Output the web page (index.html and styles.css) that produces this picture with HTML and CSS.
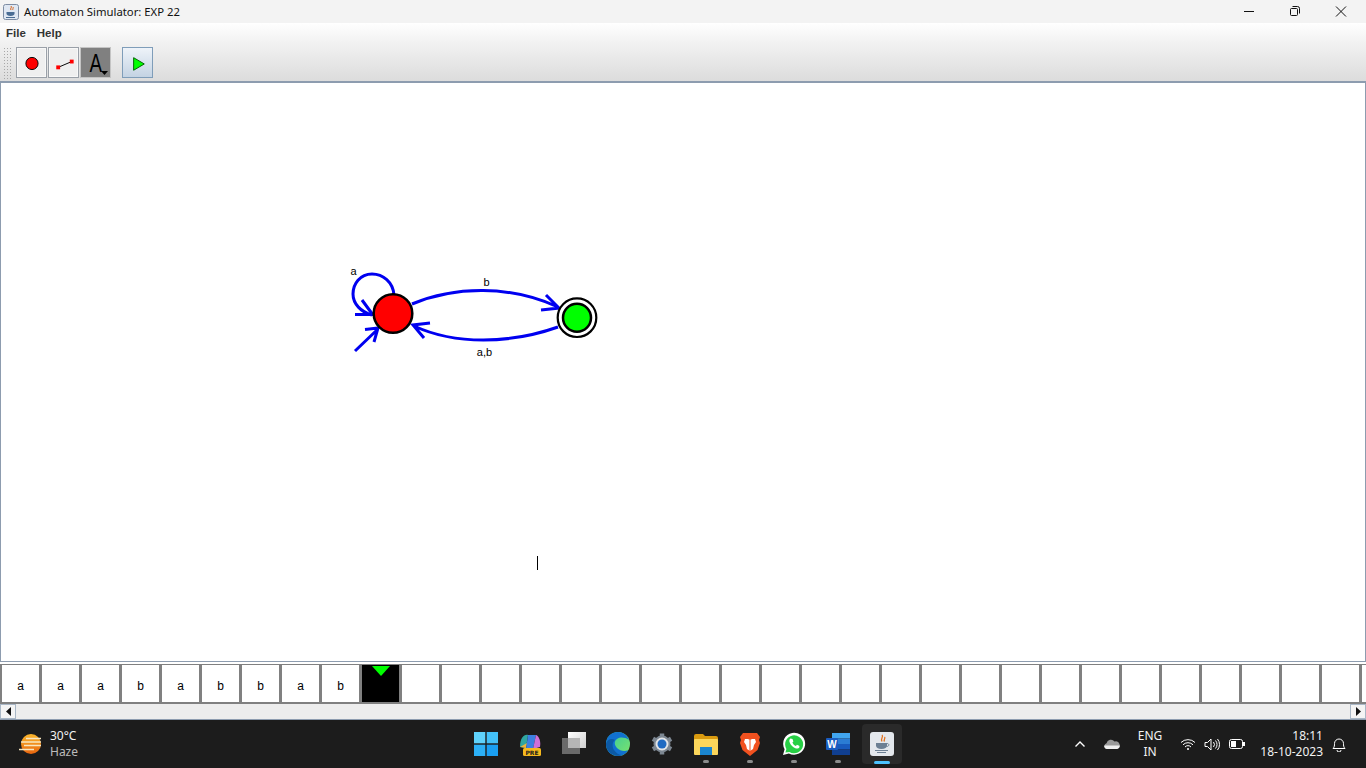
FILE: index.html
```html
<!DOCTYPE html>
<html lang="en">
<head>
<meta charset="utf-8">
<title>Automaton Simulator: EXP 22</title>
<link rel="stylesheet" href="styles.css">
</head>
<body>
<div class="app">
  <header class="titlebar">
    <svg class="app-icon" width="16" height="16" viewBox="0 0 16 16"><rect x="0.500" y="0.500" width="15" height="15" rx="2" fill="#dfe7f2" stroke="#7d8ca3"/><path d="M8 2c1.500 1.500-1.500 2.500 0 4M10 3c1 1-1 2 0 3" stroke="#d9651b" fill="none"/><path d="M3.500 8h8v1.500c0 1.500-1.500 2.500-4 2.500s-4-1-4-2.500z" fill="#4a6d94"/><path d="M3 13.500h9" stroke="#4a6d94"/></svg>
    <span class="title-text">Automaton Simulator: EXP 22</span>
    <div class="win-controls">
      <svg class="win-btn" width="46" height="22" viewBox="0 0 46 22"><path d="M18 10.500h10" stroke="#111" fill="none"/></svg>
      <svg class="win-btn" width="46" height="22" viewBox="0 0 46 22"><rect x="18.500" y="7.500" width="7" height="7" rx="1" stroke="#111" fill="none"/><path d="M20.500 5.500h5a2 2 0 0 1 2 2v5" stroke="#111" fill="none"/></svg>
      <svg class="win-btn" width="46" height="22" viewBox="0 0 46 22"><path d="M18 5.500l10 10M28 5.500l-10 10" stroke="#111" fill="none"/></svg>
    </div>
  </header>
  <nav class="menubar"><span class="menu-item">File</span><span class="menu-item">Help</span></nav>
  <div class="toolbar">
    <div class="grip"></div>
    <button class="tool"><svg width="30" height="30" viewBox="0 0 30 30"><circle cx="15.500" cy="15.500" r="6.300" fill="#f00" stroke="#000"/></svg></button>
    <button class="tool"><svg width="30" height="30" viewBox="0 0 30 30"><path d="M9.500 19.500L23.500 13.500" stroke="#000"/><rect x="7.500" y="17.500" width="4" height="4" fill="#f00"/><rect x="21.500" y="11.500" width="4" height="4" fill="#f00"/></svg></button>
    <button class="tool tool-active"><span class="tool-a">A</span><svg class="caret" width="7" height="4" viewBox="0 0 7 4"><path d="M0 0h7L3.500 4z" fill="#000"/></svg></button>
    <button class="tool tool-run"><svg width="30" height="30" viewBox="0 0 30 30"><path d="M11 9.500L22 16L11 22.500z" fill="#0f0" stroke="#006000"/></svg></button>
  </div>
  <main class="canvas">
    <svg class="diagram" width="1366" height="578" viewBox="0 83 1366 578">
      <g fill="none" stroke="#0000f0" stroke-width="3">
        <path d="M394 295C393 282 383 274 372 274C360 274 353 284 353 294C353 304 361 312 372 315"/>
        <path d="M355 314.500H373M362 300L373 315"/>
        <path d="M355 351L378 329M365 329.500L378 328L374 342"/>
        <path d="M412 304C455 286 510 285 558 307M546 295L559 308L541 310"/>
        <path d="M558 327C510 344 455 345 414 326M430 323L413 325L424 338"/>
      </g>
      <circle cx="393" cy="313.500" r="19.300" fill="#f00" stroke="#000" stroke-width="2.500"/>
      <circle cx="577" cy="317.700" r="19.300" fill="#fff" stroke="#000" stroke-width="2.200"/>
      <circle cx="577" cy="317.700" r="14" fill="#0f0" stroke="#000" stroke-width="2.500"/>
      <path d="M537.500 556v14" stroke="#000"/>
      <g class="edge-label">
        <text x="353.500" y="275" text-anchor="middle">a</text>
        <text x="486.500" y="286" text-anchor="middle">b</text>
        <text x="484.500" y="356" text-anchor="middle">a,b</text>
      </g>
    </svg>
  </main>
  <div class="tape">
    <div class="cell">a</div><div class="cell">a</div><div class="cell">a</div><div class="cell">b</div><div class="cell">a</div><div class="cell">b</div><div class="cell">b</div><div class="cell">a</div><div class="cell">b</div>
    <div class="cell cell-head"><svg width="18" height="10" viewBox="0 0 18 10"><path d="M0 0h18L9 10z" fill="#0f0"/></svg></div>
    <div class="cell"></div><div class="cell"></div><div class="cell"></div><div class="cell"></div><div class="cell"></div><div class="cell"></div><div class="cell"></div><div class="cell"></div><div class="cell"></div><div class="cell"></div><div class="cell"></div><div class="cell"></div><div class="cell"></div><div class="cell"></div><div class="cell"></div><div class="cell"></div><div class="cell"></div><div class="cell"></div><div class="cell"></div><div class="cell"></div><div class="cell"></div><div class="cell"></div><div class="cell"></div><div class="cell"></div><div class="cell"></div>
  </div>
  <div class="scrollbar">
    <div class="sb-btn"><svg width="5" height="9" viewBox="0 0 5 9"><path d="M5 0v9L0 4.500z" fill="#111"/></svg></div>
    <div class="sb-track"></div>
    <div class="sb-btn"><svg width="5" height="9" viewBox="0 0 5 9"><path d="M0 0v9L5 4.500z" fill="#111"/></svg></div>
  </div>
  <footer class="taskbar">
    <div class="weather">
      <svg width="26" height="24" viewBox="0 0 26 24"><defs><linearGradient id="sun" x1="0" y1="0" x2="0" y2="1"><stop offset="0" stop-color="#fbb72c"/><stop offset="1" stop-color="#e8650f"/></linearGradient></defs><circle cx="13" cy="12" r="10" fill="url(#sun)"/><path d="M8 6.500h15M3 10h20M6 13.500h17M1 17.500h15" stroke="#f8e6c0" stroke-width="1.500"/></svg>
      <div class="weather-text"><span class="w-temp">30°C</span><span class="w-desc">Haze</span></div>
    </div>
    <div class="task-icons">
      <div class="task-icon"><svg width="24" height="24" viewBox="0 0 24 24"><rect width="11.300" height="11.300" fill="#5fd2fb"/><rect x="12.700" width="11.300" height="11.300" fill="#43c1f8"/><rect y="12.700" width="11.300" height="11.300" fill="#2cb0f6"/><rect x="12.700" y="12.700" width="11.300" height="11.300" fill="#1a9ff2"/></svg></div>
      <div class="task-icon"><svg width="24" height="24" viewBox="0 0 24 24"><path d="M2 15C2 6 6 2 10 3L8 16z" fill="#2fa6a0"/><path d="M2 15l6 1 1-5z" fill="#ecb23c"/><path d="M10 3h8l-3 14H8z" fill="#3c7fe0"/><path d="M18 3c3 1 5 6 4 12l-7 2z" fill="#cf6fd8"/><rect x="5" y="16" width="18" height="8" rx="1.500" fill="#f6b91e"/><text class="pre" x="14" y="22.700" text-anchor="middle">PRE</text></svg></div>
      <div class="task-icon"><svg width="24" height="24" viewBox="0 0 24 24"><defs><linearGradient id="win" x1="0" y1="0" x2="1" y2="1"><stop offset="0" stop-color="#fff"/><stop offset="1" stop-color="#cfcfcf"/></linearGradient></defs><rect x="6" y="0" width="18" height="16" fill="url(#win)"/><rect x="0" y="6" width="18" height="16" fill="#6a6a6a"/><rect x="6" y="6" width="12" height="10" fill="#b5b5b5"/></svg></div>
      <div class="task-icon"><svg width="24" height="24" viewBox="0 0 24 24"><defs><linearGradient id="edge" x1="0" y1="0" x2="1" y2="1"><stop offset="0" stop-color="#2fc9a0"/><stop offset="1" stop-color="#7fe36a"/></linearGradient></defs><circle cx="12" cy="12" r="12" fill="url(#edge)"/><path d="M0 12C0 4 6 0 12 0c5 0 9 3 11 8-4-3-9-3-12-1-3 2-3 6 0 9 3 3 8 4 11 2-2 4-6 6-10 6C5 24 0 19 0 12z" fill="#1170cf"/><path d="M0 12C1 7 6 6 9 8 6 10 6 15 8 18c2 3 5 5 8 5-6 3-16-2-16-11z" fill="#0c59a4"/></svg></div>
      <div class="task-icon"><svg width="24" height="24" viewBox="0 0 24 24"><path d="M12 12m-8.500 0a8.500 8.500 0 1 0 17 0a8.500 8.500 0 1 0-17 0" fill="#7d8792"/><path d="M12 1.500v4M12 18.500v4M2.900 6.700l3.500 2M17.600 15.300l3.500 2M2.900 17.300l3.500-2M17.600 8.700l3.500-2" stroke="#7d8792" stroke-width="4.500"/><circle cx="12" cy="12" r="6.500" fill="#e2e4e7"/><circle cx="12" cy="12" r="4.500" fill="#1f6ac2"/></svg></div>
      <div class="task-icon running"><svg width="26" height="24" viewBox="0 0 26 24"><path d="M1 4a2 2 0 0 1 2-2h7l2 2h11a2 2 0 0 1 2 2v2H1z" fill="#d99a0f"/><rect x="1" y="7" width="24" height="16" rx="1" fill="#fbd65b"/><rect x="7" y="15" width="12" height="8" fill="#1a86d0"/></svg></div>
      <div class="task-icon running"><svg width="22" height="24" viewBox="0 0 22 24"><path d="M4 1h14l3 4-1 3 1 3-2.500 7L11 24l-7.500-6L1 11l1-3-1-3z" fill="#f1511f"/><path d="M6 7h3l2 1 2-1h3l1 3-2 3-1 4-3 2-3-2-1-4-2-3z" fill="#fff"/><path d="M11 8v11" stroke="#f1511f"/></svg></div>
      <div class="task-icon running"><svg width="24" height="24" viewBox="0 0 24 24"><path d="M1 23l1.600-5.800A11 11 0 1 1 6.900 21.400z" fill="#fff"/><path d="M3.400 20.600l1-3.700A9 9 0 1 1 7.500 20z" fill="#27d045"/><path d="M8.500 6.500c-1 .5-1.500 2-1 3.500 1 3 3.500 5.500 6.500 6.500 1.500.4 3-.2 3.500-1.500l-.3-1.200-2.300-1-1 1.200c-1.500-.5-3-2-3.500-3.500l1-1-.9-2.400z" fill="#fff"/></svg></div>
      <div class="task-icon running"><svg width="24" height="22" viewBox="0 0 24 22"><rect x="6" width="18" height="5.500" fill="#41a5ee"/><rect x="6" y="5.500" width="18" height="5.500" fill="#2b7cd3"/><rect x="6" y="11" width="18" height="5.500" fill="#185abd"/><rect x="6" y="16.500" width="18" height="5.500" fill="#103f91"/><rect y="5" width="12" height="12" rx="1" fill="#1a5cc0"/><text class="word-w" x="6" y="15" text-anchor="middle">W</text></svg></div>
      <div class="task-icon task-active"><svg width="24" height="24" viewBox="0 0 24 24"><rect width="24" height="24" rx="3" fill="#e4e8ed"/><path d="M12 3c2 2-2 3.500 0 6.500M14.500 5c1.500 1.500-1.500 2.500 0 4.500" stroke="#e2711d" fill="none" stroke-width="1.300"/><path d="M6 11h11v2.500c0 2-2 3.500-5.500 3.500S6 15.500 6 13.500z" fill="#6d8094"/><path d="M17 11.500c2.500 0 2.500 3-.5 3M5 18.500h13M7 20.500h9" stroke="#6d8094" fill="none"/></svg></div>
    </div>
    <div class="tray">
      <svg class="tray-chevron" width="10" height="6" viewBox="0 0 10 6"><path d="M0.500 5.500L5 1l4.500 4.500" stroke="#fff" stroke-width="1.400" fill="none"/></svg>
      <svg class="tray-cloud" width="16" height="10" viewBox="0 0 16 10"><path d="M3 10a3 3 0 0 1-.5-5.800A4.500 4.500 0 0 1 10.500 2.500 3.500 3.500 0 0 1 13 10z" fill="#9a9a9a"/><path d="M3 10a3 3 0 0 1-2.800-3.500h15.600A3.500 3.500 0 0 1 13 10z" fill="#efefef"/></svg>
      <div class="tray-lang"><span>ENG</span><span>IN</span></div>
      <svg class="tray-wifi" width="16" height="12" viewBox="0 0 16 12"><path d="M1 4.500a10 10 0 0 1 14 0M3 6.800a7 7 0 0 1 10 0M5 9a4 4 0 0 1 6 0" stroke="#fff" fill="none"/><circle cx="8" cy="11" r="1" fill="#fff"/></svg>
      <svg class="tray-sound" width="17" height="13" viewBox="0 0 17 13"><path d="M1 4.500h2.500L7 1v11L3.500 8.500H1z" stroke="#fff" fill="none"/><path d="M9.500 4a4 4 0 0 1 0 5M11.500 2.500a6 6 0 0 1 0 8M13.500 1a8.500 8.500 0 0 1 0 11" stroke="#fff" fill="none"/></svg>
      <svg class="tray-battery" width="16" height="10" viewBox="0 0 16 10"><rect x="0.500" y="0.500" width="13" height="9" rx="2" stroke="#fff" fill="none"/><rect x="2" y="2" width="5" height="6" fill="#fff"/><rect x="14" y="3" width="2" height="4" fill="#fff"/></svg>
      <div class="tray-clock"><span>18:11</span><span>18-10-2023</span></div>
      <svg class="tray-bell" width="14" height="15" viewBox="0 0 14 15"><path d="M1 11.500c1.500-1.500 1.500-3 1.500-5a4.500 4.500 0 0 1 9 0c0 2 0 3.500 1.500 5z" stroke="#fff" fill="none"/><path d="M5 13a2 2 0 0 0 4 0" stroke="#fff" fill="none"/></svg>
    </div>
  </footer>
</div>
</body>
</html>
```
FILE: styles.css
```css
* { box-sizing: border-box; }
html, body { margin: 0; padding: 0; width: 1366px; height: 768px; overflow: hidden; }
body { font-family: "Liberation Sans", Arial, sans-serif; background: #fff; color: #000; }
.app { display: flex; flex-direction: column; width: 1366px; height: 768px; }

.titlebar { display: flex; align-items: center; height: 23px; background: #f3f3f3; padding-left: 3px; flex: none; }
.app-icon { flex: none; }
.title-text { font-family: "Noto Sans", sans-serif; font-size: 11.3px; margin-left: 5px; color: #111; }
.win-controls { display: flex; margin-left: auto; padding-right: 2px; }
.win-btn { display: block; }

.menubar { display: flex; align-items: center; height: 19px; padding-left: 6px; gap: 11px; flex: none; background: linear-gradient(#fff, #f2f2f2); }
.menu-item { font-size: 11.5px; font-weight: 700; color: #333; }

.toolbar { display: flex; align-items: center; height: 40px; flex: none; padding: 2px 0 0 3px; background: linear-gradient(#f2f2f2, #dcdcdc); border-bottom: 1px solid #8d9caf; }
.grip { width: 9px; height: 32px; margin-right: 4px; background-image: radial-gradient(#a8a8a8 0.7px, transparent 0.8px); background-size: 3px 3px; }
.tool { position: relative; display: flex; align-items: center; justify-content: center; width: 31px; height: 31px; padding: 0; margin-right: 1px; border: 1px solid #9aa0a8; background: #efefef; box-shadow: inset 0 0 0 1px #f8f8f8; }
.tool-active { background: #808080; border-color: #c4c4c4; box-shadow: none; }
.tool-run { margin-left: 10px; border-color: #7f9db9; background: linear-gradient(#eef3f9, #c4d3e3); box-shadow: none; }
.tool-a { display: block; font-family: "Liberation Sans", sans-serif; font-size: 26px; line-height: 1; color: #000; transform: scaleX(0.72); }
.caret { position: absolute; right: 2px; bottom: 2px; }

.canvas { flex: none; height: 580px; background: #fff; border: 1px solid #8d9caf; }
.diagram { display: block; margin: 0 0 0 -1px; }
.edge-label text { font-family: "Liberation Sans", sans-serif; font-size: 11px; fill: #000; }

.tape { display: flex; height: 42px; flex: none; overflow: hidden; padding-top: 2px; background: #fff; }
.cell { flex: none; width: 40px; height: 40px; display: flex; align-items: center; justify-content: center; padding-top: 4px; font-family: "Liberation Sans", sans-serif; font-size: 12px; background: #fff; border: 0 solid #808080; border-width: 1px 1px 2px 2px; }
.cell-head { background: #000; align-items: flex-start; padding-top: 1px; }

.scrollbar { display: flex; height: 16px; flex: none; background: #ededed; border-bottom: 1px solid #8d9caf; }
.sb-btn { width: 16px; height: 15px; display: flex; align-items: center; justify-content: center; background: #f4f4f4; border: 1px solid #a9b7c6; }
.sb-track { flex: 1; }

.taskbar { position: relative; display: flex; align-items: center; height: 48px; flex: none; background: #1c1c1c; color: #fff; }
.weather { display: flex; align-items: center; gap: 6px; padding-left: 18px; }
.weather-text { display: flex; flex-direction: column; font-family: "Noto Sans", sans-serif; font-size: 12px; line-height: 16px; }
.w-temp { color: #f2f2f2; }
.w-desc { color: #bcbcbc; }
.task-icons { position: absolute; left: 464px; top: 0; display: flex; height: 48px; }
.task-icon { position: relative; width: 44px; height: 48px; display: flex; align-items: center; justify-content: center; }
.running::after { content: ""; position: absolute; left: 19px; bottom: 5px; width: 6px; height: 3px; border-radius: 2px; background: #8c8c8c; }
.task-active { width: 40px; height: 40px; margin: 4px 0 0 2px; background: #2a2a2a; border-radius: 4px; }
.task-active::after { content: ""; position: absolute; left: 12px; bottom: 0; width: 16px; height: 3px; border-radius: 2px; background: #4cc2ff; }
.pre { font-family: "DejaVu Sans", sans-serif; font-size: 6px; font-weight: 700; fill: #1c1c1c; }
.word-w { font-family: "Liberation Sans", sans-serif; font-size: 10px; font-weight: 700; fill: #fff; }
.tray { position: absolute; right: 0; top: 0; height: 48px; width: 299px; display: flex; align-items: center; font-family: "Noto Sans", sans-serif; font-size: 12px; color: #f2f2f2; }
.tray-chevron { margin-left: 8px; }
.tray-cloud { margin-left: 19px; }
.tray-lang { display: flex; flex-direction: column; align-items: center; width: 28px; margin-left: 16px; line-height: 16px; }
.tray-wifi { margin-left: 16px; }
.tray-sound { margin-left: 8px; }
.tray-battery { margin-left: 8px; }
.tray-clock { display: flex; flex-direction: column; align-items: flex-end; width: 70px; margin-left: 8px; line-height: 16px; }
.tray-bell { margin-left: 9px; }
```
